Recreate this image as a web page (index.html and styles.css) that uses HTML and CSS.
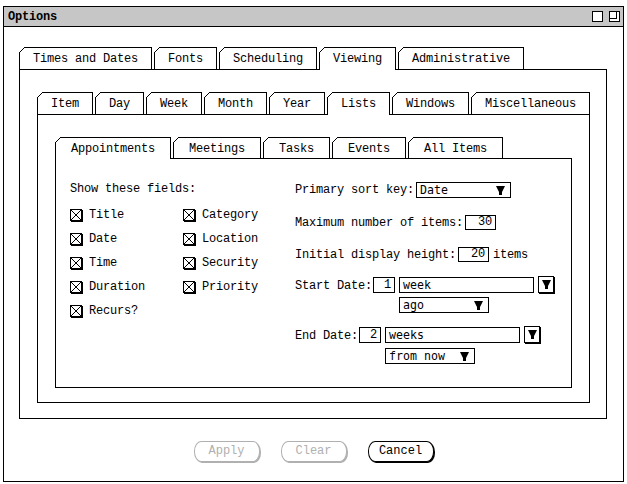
FILE: index.html
```html
<!DOCTYPE html>
<html lang="en">
<head>
  <meta charset="UTF-8" />
  <title>Options</title>
  <link rel="stylesheet" href="styles.css">
</head>
<body>
  <div class="window">
    <div class="titlebar">
      <span class="title">Options</span>
      <span class="wbtn"></span>
      <span class="wbtn restore"></span>
    </div>

    <div class="main">
      <div class="tabs">
        <div class="tab">Times and Dates</div>
        <div class="tab">Fonts</div>
        <div class="tab">Scheduling</div>
        <div class="tab on">Viewing</div>
        <div class="tab">Administrative</div>
      </div>
      <div class="panel panel-outer">
        <div class="tabs">
          <div class="tab">Item</div>
          <div class="tab">Day</div>
          <div class="tab">Week</div>
          <div class="tab">Month</div>
          <div class="tab">Year</div>
          <div class="tab on">Lists</div>
          <div class="tab">Windows</div>
          <div class="tab">Miscellaneous</div>
        </div>
        <div class="panel panel-mid">
          <div class="tabs tabs-inner">
            <div class="tab on">Appointments</div>
            <div class="tab">Meetings</div>
            <div class="tab">Tasks</div>
            <div class="tab">Events</div>
            <div class="tab">All Items</div>
          </div>
          <div class="panel pane-body">
            <div class="fields">
              <div class="caption">Show these fields:</div>
              <div class="checks">
                <label class="check"><span class="cb"></span>Title</label>
                <label class="check"><span class="cb"></span>Category</label>
                <label class="check"><span class="cb"></span>Date</label>
                <label class="check"><span class="cb"></span>Location</label>
                <label class="check"><span class="cb"></span>Time</label>
                <label class="check"><span class="cb"></span>Security</label>
                <label class="check"><span class="cb"></span>Duration</label>
                <label class="check"><span class="cb"></span>Priority</label>
                <label class="check"><span class="cb"></span>Recurs?</label>
              </div>
            </div>

            <div class="settings">
              <div class="row row-tall">
                <span>Primary sort key:</span>
                <span class="select sort-key"><span>Date</span><svg class="arrow" viewBox="0 0 9 9"><path d="M0 0h9l-3 6v3h-3v-3z"/></svg></span>
              </div>
              <div class="row">
                <span>Maximum number of items:</span>
                <span class="num num-wide">30</span>
              </div>
              <div class="row">
                <span>Initial display height:</span>
                <span class="num num-wide">20</span>
                <span class="unit">items</span>
              </div>
              <div class="date">
                <span class="date-label">Start Date:</span>
                <span class="num">1</span>
                <span class="field">week</span>
                <span class="drop-btn"><svg class="arrow" viewBox="0 0 9 9"><path d="M0 0h9l-3 6v3h-3v-3z"/></svg></span>
                <span class="select sub"><span>ago</span><svg class="arrow" viewBox="0 0 9 9"><path d="M0 0h9l-3 6v3h-3v-3z"/></svg></span>
              </div>
              <div class="date date-end">
                <span class="date-label">End Date:</span>
                <span class="num">2</span>
                <span class="field">weeks</span>
                <span class="drop-btn"><svg class="arrow" viewBox="0 0 9 9"><path d="M0 0h9l-3 6v3h-3v-3z"/></svg></span>
                <span class="select sub"><span>from now</span><svg class="arrow" viewBox="0 0 9 9"><path d="M0 0h9l-3 6v3h-3v-3z"/></svg></span>
              </div>
            </div>
          </div>
        </div>
      </div>
    </div>

    <div class="actions">
      <button class="btn" disabled>Apply</button>
      <button class="btn" disabled>Clear</button>
      <button class="btn">Cancel</button>
    </div>
  </div>
</body>
</html>
```

FILE: styles.css
```css
* { box-sizing: border-box; }
body { margin: 0; background: #fff; color: #000; font-family: "Liberation Mono", monospace; font-size: 12px; letter-spacing: -0.2px; }

.window { width: 621px; height: 476px; margin: 6px 0 0 3px; border: 1px solid #000; display: flex; flex-direction: column; }

.titlebar { height: 20px; display: flex; align-items: center; gap: 6px; padding: 0 3px 0 4px; background: #c6c6c6; border-bottom: 1px solid #000; }
.title { font-weight: bold; margin-right: auto; }
.wbtn { position: relative; width: 11px; height: 11px; border: 1px solid #000; background: #fff; }
.wbtn.restore::after { content: ""; position: absolute; left: -1px; top: -1px; width: 6px; height: 6px; border: 1px solid #000; }

.main { padding: 20px 16px 0 15px; }

/* tab strips */
.tabs { display: flex; align-items: flex-end; }
.tab { position: relative; z-index: 1; height: 22px; line-height: 21px; padding: 1px 13px 0; margin-right: 2px; border: 1px solid #000; border-bottom: 0; background: #fff; white-space: nowrap; }
.tab::before { content: ""; position: absolute; left: -1px; top: -1px; width: 6px; height: 6px;
  background: linear-gradient(to bottom right, #fff 0 calc(50% - 0.7px), #000 calc(50% - 0.7px) calc(50% + 0.7px), transparent calc(50% + 0.7px)); }
.tab.on { height: 23px; margin-bottom: -1px; }
.tabs-inner .tab { height: 21px; line-height: 20px; padding: 1px 15px 0; }
.tabs-inner .tab.on { height: 22px; }

.panel { border: 1px solid #000; }
.panel-outer { padding: 22px 16px 15px 17px; }
.panel-mid { padding: 22px 17px 14px 17px; }
.pane-body { height: 230px; display: flex; padding: 23px 0 0 14px; }

/* left: field checkboxes */
.fields { width: 225px; }
.caption { line-height: 14px; }
.checks { display: grid; grid-template-columns: 113px auto; row-gap: 10px; margin-top: 12px; }
.check { display: flex; align-items: center; gap: 7px; line-height: 14px; }
.cb { width: 12px; height: 12px; border: 1px solid #000; box-shadow: 1px 1px 0 #000;
  background:
    linear-gradient(45deg, transparent calc(50% - 0.6px), #000 calc(50% - 0.6px) calc(50% + 0.6px), transparent calc(50% + 0.6px)),
    linear-gradient(-45deg, transparent calc(50% - 0.6px), #000 calc(50% - 0.6px) calc(50% + 0.6px), transparent calc(50% + 0.6px)); }

/* right: list settings */
.settings { display: flex; flex-direction: column; align-items: flex-start; gap: 17px; }
.row { display: flex; align-items: center; gap: 2px; height: 15px; }
.row-tall { height: 16px; }
.unit { margin-left: 2px; }

.num { height: 15px; width: 22px; border: 1px solid #000; text-align: right; padding-right: 3px; line-height: 13px; }
.num-wide { width: 31px; }
.field, .select { height: 16px; border: 1px solid #000; font-family: "DejaVu Sans Mono", monospace; font-size: 11.6px; letter-spacing: 0; line-height: 14px; padding-left: 3px; }
.field { width: 135px; }
.select { display: flex; align-items: center; justify-content: space-between; padding-right: 5px; }
.sort-key { width: 95px; }
.arrow { width: 9px; height: 9px; fill: #000; }

.date { display: grid; grid-template-columns: auto auto auto auto; justify-content: start; column-gap: 4px; row-gap: 4px; align-items: center; justify-items: start; margin-top: -3px; }
.date-end { row-gap: 5px; margin-top: -4px; }
.date .num { height: 16px; line-height: 14px; }
.date-label { margin-right: -3px; padding-top: 2px; }
.drop-btn { width: 16px; height: 17px; border: 1px solid #000; box-shadow: 1px 1px 0 #000; display: flex; align-items: center; justify-content: center; }
.sub { grid-column: 3 / span 2; width: 90px; }

/* dialog buttons */
.actions { display: flex; justify-content: center; gap: 21px; padding-top: 22px; }
.btn { width: 66px; height: 21px; padding: 0; border: 1px solid #000; border-radius: 7px / 10px; box-shadow: 1px 1px 0 #000; background: #fff; color: #000; font: inherit; line-height: 19px; }
.btn:disabled { color: #b0b0b0; border-color: #b0b0b0; box-shadow: 1px 1px 0 #b0b0b0; }
```
